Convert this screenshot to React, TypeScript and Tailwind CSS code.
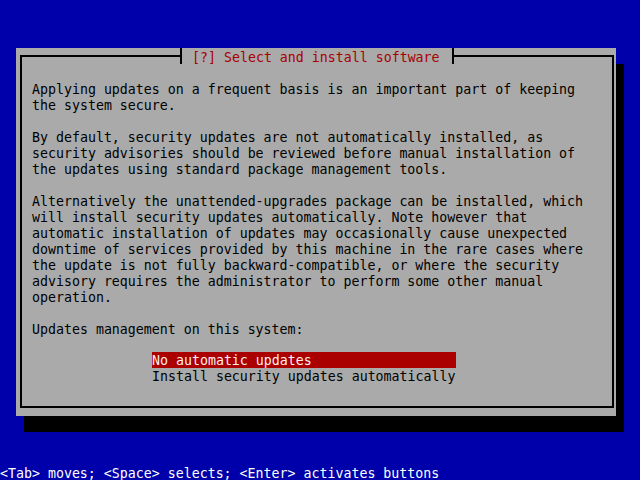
import React from 'react';

const bodyLines = [
  'Applying updates on a frequent basis is an important part of keeping',
  'the system secure.',
  '',
  'By default, security updates are not automatically installed, as',
  'security advisories should be reviewed before manual installation of',
  'the updates using standard package management tools.',
  '',
  'Alternatively the unattended-upgrades package can be installed, which',
  'will install security updates automatically. Note however that',
  'automatic installation of updates may occasionally cause unexpected',
  'downtime of services provided by this machine in the rare cases where',
  'the update is not fully backward-compatible, or where the security',
  'advisory requires the administrator to perform some other manual',
  'operation.',
  '',
  'Updates management on this system:',
  '',
];

const options = ['No automatic updates', 'Install security updates automatically'];

const App: React.FC = () => {
  const selected = 0;

  return (
    <div className="w-[640px] h-[480px] bg-[#0000aa] flex flex-col font-['DejaVu_Sans_Mono',monospace] text-[13.28px] leading-[19px] overflow-hidden">
      <div className="h-[48px] shrink-0" />

      {/* dialog */}
      <div className="ml-[16px] w-[600px] h-[368px] shrink-0 bg-[#aaaaaa] shadow-[8px_16px_0_0_#000] pl-[4px] pt-[7px]">
        <div className="relative w-[594px] h-[353px] border-2 border-black pl-[10px] pt-[23px]">
          <div className="absolute left-[158px] top-[-9px] w-[274px] h-[16px] bg-[#aaaaaa] border-x-2 border-black pl-[10px] text-[#a80000] whitespace-pre">
            [?] Select and install software
          </div>

          {bodyLines.map((line, i) => (
            <div key={i} className="h-[16px] text-black whitespace-pre">
              {line}
            </div>
          ))}

          {options.map((opt, i) => (
            <div
              key={opt}
              className={`ml-[120px] w-[304px] h-[16px] leading-[18px] whitespace-pre ${
                i === selected ? 'bg-[#aa0000] text-[#ffeeee]' : 'text-black'
              }`}
            >
              {opt}
            </div>
          ))}
        </div>
      </div>

      <div className="mt-[48px] h-[16px] shrink-0 text-white whitespace-pre">
        {'<Tab> moves; <Space> selects; <Enter> activates buttons'}
      </div>
    </div>
  );
};

export default App;
